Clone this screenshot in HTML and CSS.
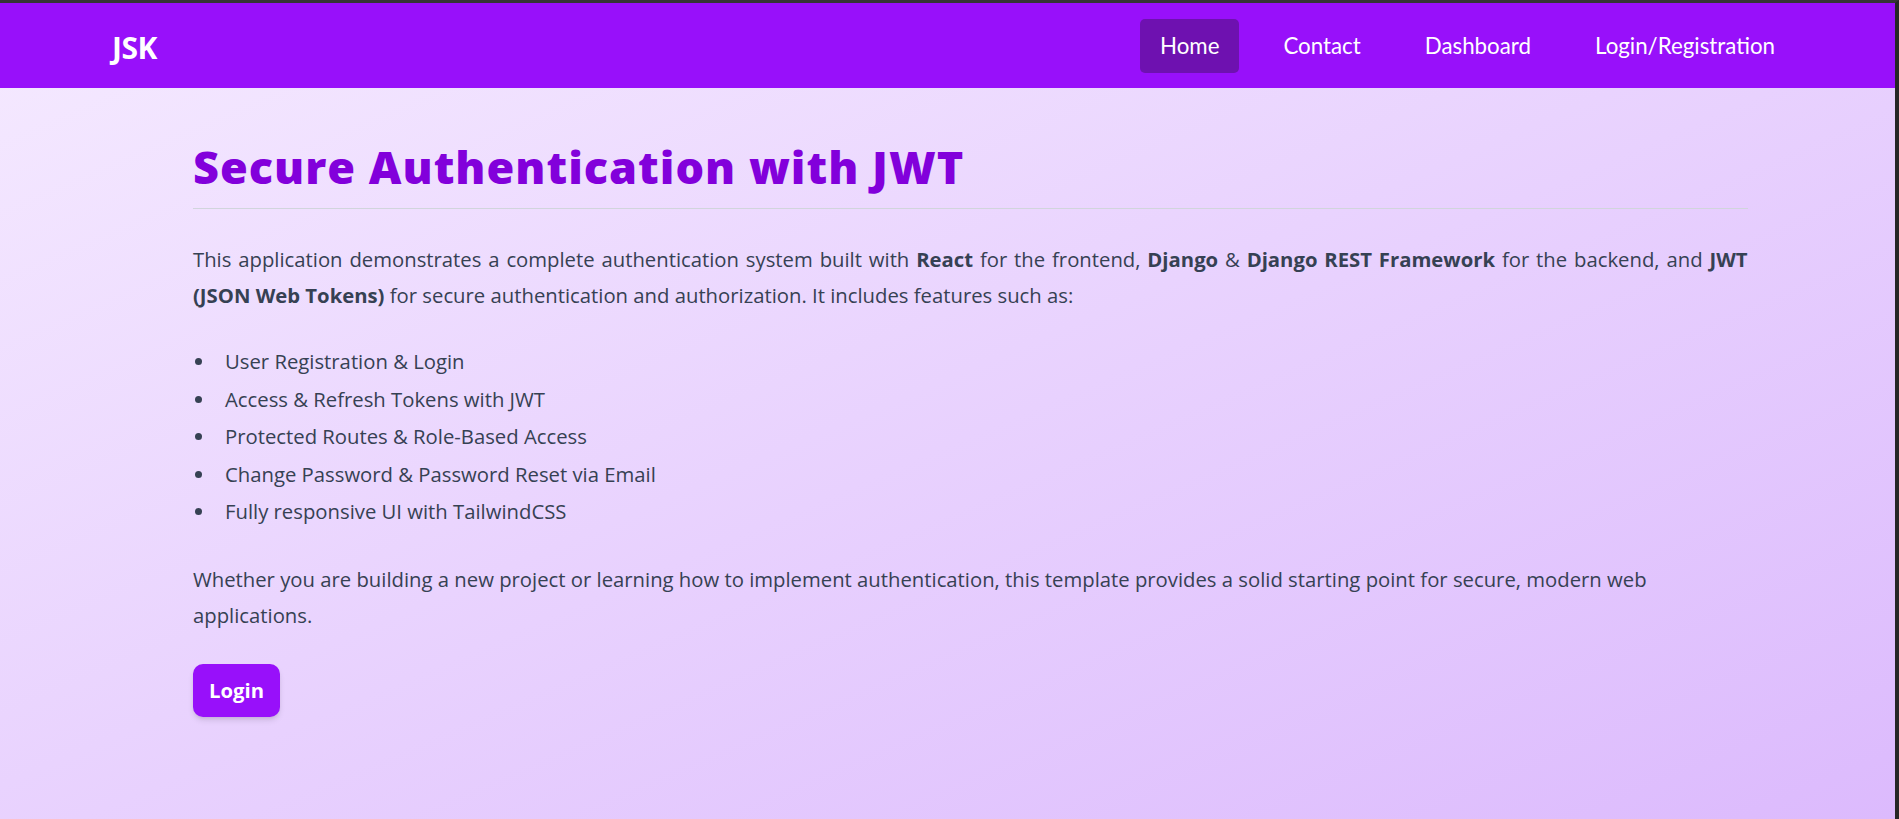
FILE: index.html
```html
<!DOCTYPE html>
<html lang="en">
<head>
<meta charset="utf-8">
<title>JSK</title>
<link rel="stylesheet" href="styles.css">
</head>
<body>
<div class="frame">
  <header class="navbar">
    <a class="brand" href="#">JSK</a>
    <nav class="nav">
      <a class="nav-link active" href="#">Home</a>
      <a class="nav-link" href="#">Contact</a>
      <a class="nav-link" href="#">Dashboard</a>
      <a class="nav-link" href="#">Login/Registration</a>
    </nav>
  </header>
  <main class="content">
    <h1 class="title">Secure Authentication with JWT</h1>
    <p class="intro">This application demonstrates a complete authentication system built with <strong>React</strong> for the frontend, <strong>Django</strong> &amp; <strong>Django REST Framework</strong> for the backend, and <strong>JWT (JSON Web Tokens)</strong> for secure authentication and authorization. It includes features such as:</p>
    <ul class="features">
      <li>User Registration &amp; Login</li>
      <li>Access &amp; Refresh Tokens with JWT</li>
      <li>Protected Routes &amp; Role-Based Access</li>
      <li>Change Password &amp; Password Reset via Email</li>
      <li>Fully responsive UI with TailwindCSS</li>
    </ul>
    <p class="outro">Whether you are building a new project or learning how to implement authentication, this template provides a solid starting point for secure, modern web applications.</p>
    <a class="btn" href="#">Login</a>
  </main>
</div>
</body>
</html>
```
FILE: styles.css
```css
* { box-sizing: border-box; }
html, body { margin: 0; padding: 0; }
body {
  font-family: "Segoe UI", "Open Sans", "Liberation Sans", sans-serif;
  color: #364153;
  background: #2b2b2b;
}
.frame {
  height: 819px;
  border-top: 3px solid #353535;
  border-right: 4px solid #262626;
  background: linear-gradient(to bottom right, #f5eaff, #dcbafd);
  overflow: hidden;
}
.navbar {
  height: 85px;
  background: #9810fa;
  display: flex;
  align-items: center;
  justify-content: space-between;
  padding: 0 100px 0 112px;
}
.brand {
  color: #fff;
  text-decoration: none;
  font-family: "Open Sans", sans-serif;
  font-size: 30px;
  font-weight: 700;
  letter-spacing: -0.5px;
  line-height: 40px;
  margin-top: 4px;
}
.nav {
  display: flex;
  gap: 24px;
}
.nav-link {
  color: #fff;
  text-decoration: none;
  font-family: Lato, "Open Sans", sans-serif;
  font-size: 22.3px;
  line-height: 34px;
  padding: 10px 20px;
  border-radius: 5px;
}
.nav-link.active { background: #6e11b0; }
.content {
  width: 1600px;
  margin: 0 auto;
  padding: 54px 0 0 45.5px;
}
.title {
  margin: 0;
  font-family: "Open Sans", sans-serif;
  font-size: 45px;
  line-height: 50px;
  font-weight: 800;
  letter-spacing: 1px;
  color: #8200db;
  padding-bottom: 16px;
  border-bottom: 1px solid #d1d5dc;
}
.intro, .outro {
  margin: 0;
  font-size: 20.3px;
  line-height: 36px;
}
.intro { margin-top: 32px; text-align: justify; }
.intro strong { font-weight: 700; }
.features {
  list-style: none;
  margin: 30px 0 0;
  padding: 0 0 0 32px;
  font-size: 20.3px;
  line-height: 37.5px;
}
.features li::before {
  content: "";
  display: inline-block;
  width: 7px;
  height: 7px;
  border-radius: 50%;
  background: #364153;
  margin-left: -30px;
  margin-right: 23px;
  vertical-align: 4px;
}
.outro { margin-top: 30px; }
.btn {
  display: inline-flex;
  align-items: center;
  height: 53px;
  margin-top: 31px;
  padding: 0 16px;
  background: #9810fa;
  color: #fff;
  font-size: 20.3px;
  font-weight: 700;
  text-decoration: none;
  border-radius: 10px;
  box-shadow: 0 4px 6px -1px rgba(0,0,0,0.12), 0 2px 4px -2px rgba(0,0,0,0.1);
}
```
